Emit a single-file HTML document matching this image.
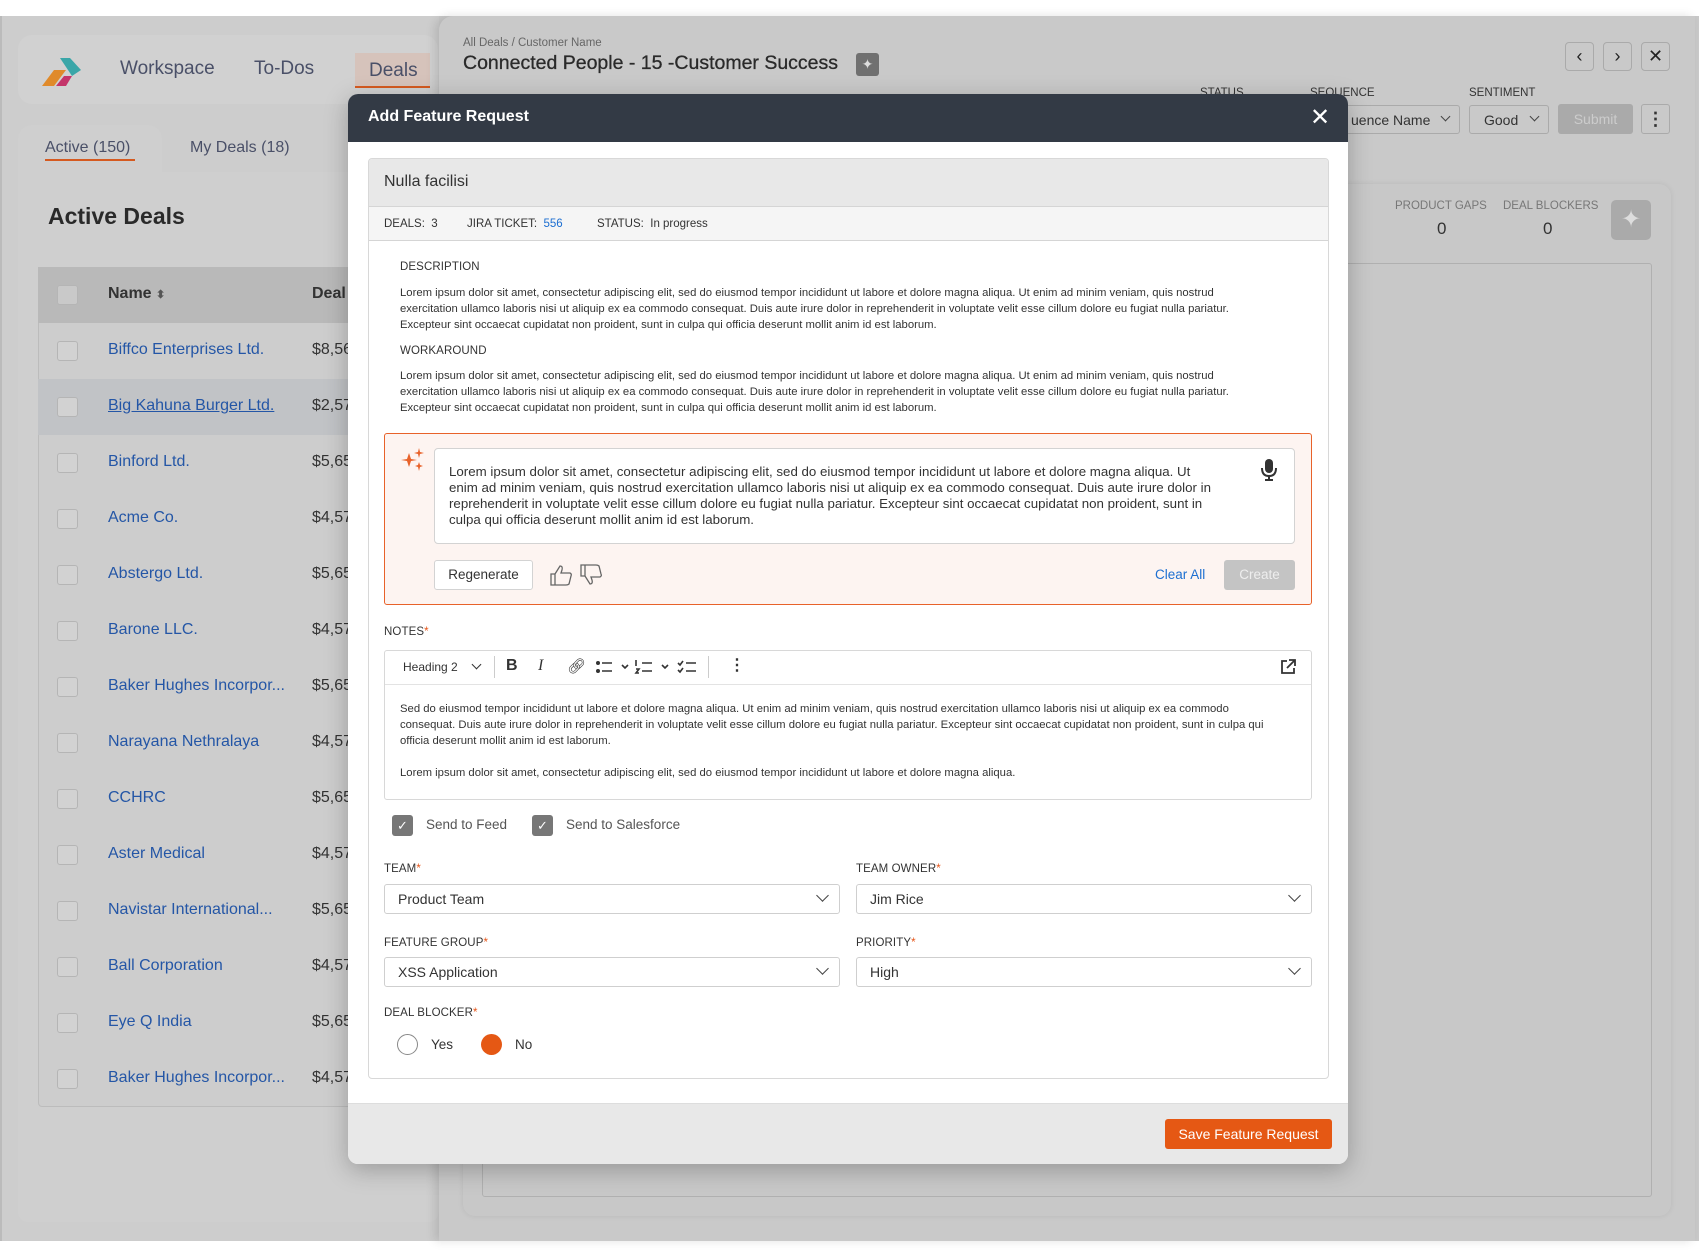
<!DOCTYPE html>
<html><head><meta charset="utf-8"><style>
*{box-sizing:border-box;margin:0;padding:0}
body{width:1699px;height:1258px;position:relative;overflow:hidden;background:#fff;font-family:"Liberation Sans",sans-serif;color:#333}
.a{position:absolute}
.lbl{font-size:11.5px;color:#333;letter-spacing:.1px}
.req{color:#e6561a}
.p{font-size:11.3px;line-height:16px;color:#333}
.sel{position:absolute;height:30px;border:1px solid #cfcfcf;border-radius:3px;background:#fff;font-size:14px;color:#333;padding:6px 13px}
.chev{position:absolute;right:12px;width:9px;height:9px;border-right:1.5px solid #444;border-bottom:1.5px solid #444;transform:rotate(45deg);top:6px}
.row{position:absolute;left:38px;width:310px;height:56px}
.cb{position:absolute;left:19px;top:18px;width:21px;height:20px;border:1.5px solid #b5b5b5;border-radius:3px;background:#d2d2d2}
.nm{position:absolute;left:70px;top:18px;font-size:16px;color:#2456a6}
.am{position:absolute;left:274px;top:18px;font-size:16px;color:#333}
</style></head><body>
<div class="a" style="left:0;top:16px;width:1699px;height:1225px;background:#c9c9c9"></div>
<div class="a" style="left:0;top:16px;width:439px;height:1225px;background:#cdcdcd"></div>
<div class="a" style="left:0;top:16px;width:2px;height:1225px;background:#bbb"></div>
<div class="a" style="left:18px;top:35px;width:420px;height:69px;background:#d1d1d1;border-radius:14px"></div>
<svg class="a" style="left:40px;top:56px" width="42" height="32" viewBox="0 0 42 32"><polygon points="2,30 14,14 26,14 14,30" fill="#e08a2a"/><polygon points="16,30 24,20 32,20 26,30" fill="#c4356a"/><polygon points="20,2 30,2 41,14 32,20 28,14" fill="#3aa6a8"/></svg>
<div class="a" style="left:120px;top:58px;font-size:19px;color:#4a5068">Workspace</div>
<div class="a" style="left:254px;top:58px;font-size:19px;color:#4a5068">To-Dos</div>
<div class="a" style="left:355px;top:53px;width:75px;height:35px;background:#d6c3bb"></div>
<div class="a" style="left:355px;top:86px;width:75px;height:2px;background:#d55a20"></div>
<div class="a" style="left:369px;top:60px;font-size:19px;color:#4a5068">Deals</div>
<div class="a" style="left:18px;top:125px;width:144px;height:60px;background:#cfcfcf;border-radius:14px 14px 0 0"></div>
<div class="a" style="left:18px;top:172px;width:421px;height:1050px;background:#cfcfcf;border-radius:0 0 10px 10px"></div>
<div class="a" style="left:45px;top:139px;font-size:16px;color:#4a5068">Active (150)</div>
<div class="a" style="left:45px;top:159px;width:90px;height:2px;background:#d55a20"></div>
<div class="a" style="left:190px;top:139px;font-size:16px;color:#4a5068">My Deals (18)</div>
<div class="a" style="left:48px;top:203px;font-size:23px;font-weight:bold;color:#2a2a2a">Active Deals</div>
<div class="a" style="left:38px;top:267px;width:320px;height:840px;background:#cdcdcd;border:1px solid #bcbcbc;border-radius:4px"></div>
<div class="row" style="top:267px;background:#b9b9b9"><div class="cb" style="background:#c9c9c9"></div><div class="nm" style="color:#333;font-weight:bold;font-size:16px">Name <span style="font-size:11px;color:#555">&#x2B0D;</span></div><div class="am" style="font-weight:bold">Deal</div></div>
<div class="row" style="top:323px"><div class="cb"></div><div class="nm">Biffco Enterprises Ltd.</div><div class="am">$8,56</div></div>
<div class="row" style="top:379px;background:#c1c3c6"><div class="cb"></div><div class="nm" style="text-decoration:underline">Big Kahuna Burger Ltd.</div><div class="am">$2,57</div></div>
<div class="row" style="top:435px"><div class="cb"></div><div class="nm">Binford Ltd.</div><div class="am">$5,65</div></div>
<div class="row" style="top:491px"><div class="cb"></div><div class="nm">Acme Co.</div><div class="am">$4,57</div></div>
<div class="row" style="top:547px"><div class="cb"></div><div class="nm">Abstergo Ltd.</div><div class="am">$5,65</div></div>
<div class="row" style="top:603px"><div class="cb"></div><div class="nm">Barone LLC.</div><div class="am">$4,57</div></div>
<div class="row" style="top:659px"><div class="cb"></div><div class="nm">Baker Hughes Incorpor...</div><div class="am">$5,65</div></div>
<div class="row" style="top:715px"><div class="cb"></div><div class="nm">Narayana Nethralaya</div><div class="am">$4,57</div></div>
<div class="row" style="top:771px"><div class="cb"></div><div class="nm">CCHRC</div><div class="am">$5,65</div></div>
<div class="row" style="top:827px"><div class="cb"></div><div class="nm">Aster Medical</div><div class="am">$4,57</div></div>
<div class="row" style="top:883px"><div class="cb"></div><div class="nm">Navistar International...</div><div class="am">$5,65</div></div>
<div class="row" style="top:939px"><div class="cb"></div><div class="nm">Ball Corporation</div><div class="am">$4,57</div></div>
<div class="row" style="top:995px"><div class="cb"></div><div class="nm">Eye Q India</div><div class="am">$5,65</div></div>
<div class="row" style="top:1051px"><div class="cb"></div><div class="nm">Baker Hughes Incorpor...</div><div class="am">$4,57</div></div>
<div class="a" style="left:439px;top:16px;width:1256px;height:1225px;background:#c9c9c9;border-radius:14px 0 0 0;box-shadow:-4px 0 10px rgba(0,0,0,.12)"></div>
<div class="a" style="left:463px;top:37px;font-size:11.5px;color:#666">All Deals / Customer Name</div>
<div class="a" style="left:463px;top:52px;font-size:19.5px;color:#2a2a2a;-webkit-text-stroke:.3px #2a2a2a">Connected People - 15 -Customer Success</div>
<div class="a" style="left:856px;top:53px;width:23px;height:23px;background:#707070;border-radius:3px;color:#ddd;font-size:14px;text-align:center;line-height:23px">&#10022;</div>
<div class="a" style="left:1565px;top:42px;width:29px;height:29px;border:1px solid #aaa;border-radius:4px;font-size:18px;text-align:center;line-height:26px;color:#222">&#x2039;</div>
<div class="a" style="left:1603px;top:42px;width:29px;height:29px;border:1px solid #aaa;border-radius:4px;font-size:18px;text-align:center;line-height:26px;color:#222">&#x203A;</div>
<div class="a" style="left:1641px;top:42px;width:29px;height:29px;border:1px solid #aaa;border-radius:4px;font-size:18px;text-align:center;line-height:27px;color:#222">&#x2715;</div>
<div class="a" style="left:1200px;top:87px;font-size:11.5px;color:#333">STATUS</div>
<div class="a" style="left:1310px;top:87px;font-size:11.5px;color:#333">SEQUENCE</div>
<div class="a" style="left:1469px;top:87px;font-size:11.5px;color:#333">SENTIMENT</div>
<div class="a" style="left:1300px;top:105px;width:160px;height:29px;border:1px solid #aaa;border-radius:3px;font-size:14px;padding:6px 0 0 50px;color:#333">uence Name<div class="chev" style="right:10px;top:7px;width:7px;height:7px"></div></div>
<div class="a" style="left:1469px;top:105px;width:80px;height:29px;border:1px solid #aaa;border-radius:3px;font-size:14px;padding:6px 0 0 14px;color:#333">Good<div class="chev" style="right:10px;top:7px;width:7px;height:7px"></div></div>
<div class="a" style="left:1558px;top:104px;width:75px;height:30px;background:#aaa;border-radius:3px;font-size:14px;color:#ccc;text-align:center;line-height:30px">Submit</div>
<div class="a" style="left:1641px;top:104px;width:29px;height:30px;border:1px solid #aaa;border-radius:3px;font-size:18px;text-align:center;line-height:28px;font-weight:bold;color:#333">&#8942;</div>
<div class="a" style="left:463px;top:184px;width:1208px;height:1032px;background:#c8c8c8;border-radius:12px;box-shadow:0 0 6px rgba(0,0,0,.08)"></div>
<div class="a" style="left:1395px;top:200px;font-size:11.5px;color:#777">PRODUCT GAPS</div>
<div class="a" style="left:1437px;top:219px;font-size:17px;color:#333">0</div>
<div class="a" style="left:1503px;top:200px;font-size:11.5px;color:#777">DEAL BLOCKERS</div>
<div class="a" style="left:1543px;top:219px;font-size:17px;color:#333">0</div>
<div class="a" style="left:1611px;top:200px;width:40px;height:40px;background:#aaa;border-radius:5px;color:#ddd;font-size:24px;text-align:center;line-height:40px">&#10022;</div>
<div class="a" style="left:482px;top:263px;width:1170px;height:934px;border:1px solid #b0b0b0;border-radius:3px"></div>
<div class="a" style="left:348px;top:94px;width:1000px;height:1070px;background:#fff;border-radius:10px;overflow:hidden;box-shadow:0 6px 24px rgba(0,0,0,.25)">
 <div class="a" style="left:0;top:0;width:1000px;height:48px;background:#333a45"></div>
 <div class="a" style="left:20px;top:14px;font-size:16px;color:#fff;font-weight:bold">Add Feature Request</div>
 <div class="a" style="left:962px;top:9px;font-size:24px;color:#fff">&#x2715;</div>
 <div class="a" style="left:0;top:1009px;width:1000px;height:61px;background:#e8e8e8;border-top:1px solid #ddd"></div>
 <div class="a" style="left:817px;top:1025px;width:167px;height:30px;background:#e55814;border-radius:3px;color:#fff;font-size:14px;text-align:center;line-height:30px">Save Feature Request</div>
</div>
<div class="a" style="left:368px;top:158px;width:961px;height:921px;border:1px solid #d8d8d8;border-radius:4px;background:#fff;overflow:hidden">
 <div class="a" style="left:0;top:0;width:961px;height:48px;background:#e8e8e8;border-bottom:1px solid #d5d5d5"></div>
 <div class="a" style="left:15px;top:14px;font-size:16px;color:#333">Nulla facilisi</div>
 <div class="a" style="left:0;top:48px;width:961px;height:34px;background:#f5f5f5;border-bottom:1px solid #d5d5d5"></div>
 <div class="a" style="left:15px;top:59px;font-size:11.5px;color:#333">DEALS:&nbsp; 3</div>
 <div class="a" style="left:98px;top:59px;font-size:11.5px;color:#333">JIRA TICKET:&nbsp; <span style="color:#1d6fd1">556</span></div>
 <div class="a" style="left:228px;top:59px;font-size:11.5px;color:#333">STATUS:&nbsp; In progress</div>
</div>
<div class="a lbl" style="left:400px;top:261px">DESCRIPTION</div>
<div class="a p" style="left:400px;top:285px;width:872px">Lorem ipsum dolor sit amet, consectetur adipiscing elit, sed do eiusmod tempor incididunt ut labore et dolore magna aliqua. Ut enim ad minim veniam, quis nostrud exercitation ullamco laboris nisi ut aliquip ex ea commodo consequat. Duis aute irure dolor in reprehenderit in voluptate velit esse cillum dolore eu fugiat nulla pariatur. Excepteur sint occaecat cupidatat non proident, sunt in culpa qui officia deserunt mollit anim id est laborum.</div>
<div class="a lbl" style="left:400px;top:345px">WORKAROUND</div>
<div class="a p" style="left:400px;top:368px;width:872px">Lorem ipsum dolor sit amet, consectetur adipiscing elit, sed do eiusmod tempor incididunt ut labore et dolore magna aliqua. Ut enim ad minim veniam, quis nostrud exercitation ullamco laboris nisi ut aliquip ex ea commodo consequat. Duis aute irure dolor in reprehenderit in voluptate velit esse cillum dolore eu fugiat nulla pariatur. Excepteur sint occaecat cupidatat non proident, sunt in culpa qui officia deserunt mollit anim id est laborum.</div>
<div class="a" style="left:384px;top:433px;width:928px;height:172px;background:#fdf4f1;border:1.5px solid #e8622a;border-radius:3px"></div>
<svg class="a" style="left:401px;top:448px" width="24" height="24" viewBox="0 0 24 24" fill="#e8622a"><path d="M8 5 L10 11 L16 12 L10 13 L8 19 L6 13 L0 12 L6 11Z"/><path d="M18 0 L19 4 L23 5 L19 6 L18 10 L17 6 L13 5 L17 4Z"/><path d="M18 14 L19 17 L22 18 L19 19 L18 23 L17 19 L14 18 L17 17Z"/></svg>
<div class="a" style="left:434px;top:448px;width:861px;height:96px;background:#fff;border:1px solid #d3d3d3;border-radius:4px"></div>
<div class="a" style="left:449px;top:464px;width:772px;font-size:13.3px;line-height:16px;color:#333">Lorem ipsum dolor sit amet, consectetur adipiscing elit, sed do eiusmod tempor incididunt ut labore et dolore magna aliqua. Ut enim ad minim veniam, quis nostrud exercitation ullamco laboris nisi ut aliquip ex ea commodo consequat. Duis aute irure dolor in reprehenderit in voluptate velit esse cillum dolore eu fugiat nulla pariatur. Excepteur sint occaecat cupidatat non proident, sunt in culpa qui officia deserunt mollit anim id est laborum.</div>
<svg class="a" style="left:1261px;top:459px" width="16" height="22" viewBox="0 0 16 22"><rect x="4" y="0" width="8" height="14" rx="4" fill="#333"/><path d="M1 9 Q1 17 8 17 Q15 17 15 9" fill="none" stroke="#333" stroke-width="2"/><path d="M8 17 V21 M4 21 H12" stroke="#333" stroke-width="2"/></svg>
<div class="a" style="left:434px;top:560px;width:99px;height:30px;background:#fff;border:1px solid #d3d3d3;border-radius:3px;font-size:13.5px;text-align:center;line-height:28px;color:#333">Regenerate</div>
<svg class="a" style="left:550px;top:564px" width="52" height="22" viewBox="0 0 52 22" fill="none" stroke="#666" stroke-width="1.3"><path d="M1 10 H5 V21 H1Z M5 10 L10 2 Q13 2 12 6 L11 9 H20 Q22 10 21 12 L19 20 Q18 21 16 21 H5"/><path d="M31 12 H35 V1 H31Z M35 12 L40 20 Q43 20 42 16 L41 13 H50 Q52 12 51 10 L49 2 Q48 1 46 1 H35"/></svg>
<div class="a" style="left:1155px;top:567px;font-size:13.5px;color:#1d6fd1">Clear All</div>
<div class="a" style="left:1224px;top:560px;width:71px;height:30px;background:#c4c4c4;border-radius:3px;font-size:13.5px;text-align:center;line-height:30px;color:#eee">Create</div>
<div class="a lbl" style="left:384px;top:626px">NOTES<span class="req">*</span></div>
<div class="a" style="left:384px;top:650px;width:928px;height:150px;border:1px solid #d8d8d8;border-radius:3px;background:#fff"></div>
<div class="a" style="left:385px;top:684px;width:926px;height:1px;background:#e3e3e3"></div>
<div class="a" style="left:403px;top:660px;font-size:12px;color:#333">Heading 2</div>
<div class="a" style="left:473px;top:661px;width:7px;height:7px;border-right:1.3px solid #333;border-bottom:1.3px solid #333;transform:rotate(45deg)"></div>
<div class="a" style="left:494px;top:656px;width:1px;height:22px;background:#ccc"></div>
<div class="a" style="left:506px;top:657px;font-size:16px;font-weight:bold;color:#333">B</div>
<div class="a" style="left:538px;top:657px;font-size:16px;font-style:italic;font-family:'Liberation Serif',serif;color:#333">I</div>
<div class="a" style="left:567px;top:657px;font-size:15px;color:#333">&#x1F517;&#xFE0E;</div>
<svg class="a" style="left:596px;top:659px" width="120" height="16" viewBox="0 0 120 16" stroke="#333" stroke-width="1.6" fill="none"><circle cx="2" cy="4" r="1.2" fill="#333"/><circle cx="2" cy="12" r="1.2" fill="#333"/><path d="M6 4H16M6 12H16M26 6l3 3 3-3"/><path d="M46 4H56M46 12H56M40 1V7M40 10h3l-3 4h3M66 6l3 3 3-3"/><path d="M82 4l2 2 3-4M82 11l2 2 3-4M90 4H100M90 12H100"/></svg>
<div class="a" style="left:708px;top:656px;width:1px;height:22px;background:#ccc"></div>
<div class="a" style="left:729px;top:655px;font-size:16px;font-weight:bold;color:#333">&#8942;</div>
<svg class="a" style="left:1280px;top:659px" width="16" height="16" viewBox="0 0 16 16" fill="none" stroke="#333" stroke-width="1.8"><path d="M7 2H2V14H14V9M9 1H15V7M15 1L7 9"/></svg>
<div class="a p" style="left:400px;top:701px;width:880px">Sed do eiusmod tempor incididunt ut labore et dolore magna aliqua. Ut enim ad minim veniam, quis nostrud exercitation ullamco laboris nisi ut aliquip ex ea commodo consequat. Duis aute irure dolor in reprehenderit in voluptate velit esse cillum dolore eu fugiat nulla pariatur. Excepteur sint occaecat cupidatat non proident, sunt in culpa qui officia deserunt mollit anim id est laborum.</div>
<div class="a p" style="left:400px;top:765px;width:900px">Lorem ipsum dolor sit amet, consectetur adipiscing elit, sed do eiusmod tempor incididunt ut labore et dolore magna aliqua.</div>
<div class="a" style="left:392px;top:815px;width:21px;height:21px;background:#777;border-radius:3px;color:#fff;font-size:13px;text-align:center;line-height:21px">&#10003;</div>
<div class="a" style="left:426px;top:817px;font-size:13.5px;color:#555">Send to Feed</div>
<div class="a" style="left:532px;top:815px;width:21px;height:21px;background:#777;border-radius:3px;color:#fff;font-size:13px;text-align:center;line-height:21px">&#10003;</div>
<div class="a" style="left:566px;top:817px;font-size:13.5px;color:#555">Send to Salesforce</div>
<div class="a lbl" style="left:384px;top:863px">TEAM<span class="req">*</span></div>
<div class="a lbl" style="left:856px;top:863px">TEAM OWNER<span class="req">*</span></div>
<div class="sel" style="left:384px;top:884px;width:456px">Product Team<div class="chev"></div></div>
<div class="sel" style="left:856px;top:884px;width:456px">Jim Rice<div class="chev"></div></div>
<div class="a lbl" style="left:384px;top:937px">FEATURE GROUP<span class="req">*</span></div>
<div class="a lbl" style="left:856px;top:937px">PRIORITY<span class="req">*</span></div>
<div class="sel" style="left:384px;top:957px;width:456px">XSS Application<div class="chev"></div></div>
<div class="sel" style="left:856px;top:957px;width:456px">High<div class="chev"></div></div>
<div class="a lbl" style="left:384px;top:1007px">DEAL BLOCKER<span class="req">*</span></div>
<div class="a" style="left:397px;top:1034px;width:21px;height:21px;border:1.5px solid #888;border-radius:50%"></div>
<div class="a" style="left:431px;top:1037px;font-size:13.5px;color:#333">Yes</div>
<div class="a" style="left:481px;top:1034px;width:21px;height:21px;background:#e55814;border-radius:50%"></div>
<div class="a" style="left:515px;top:1037px;font-size:13.5px;color:#333">No</div>
</body></html>
